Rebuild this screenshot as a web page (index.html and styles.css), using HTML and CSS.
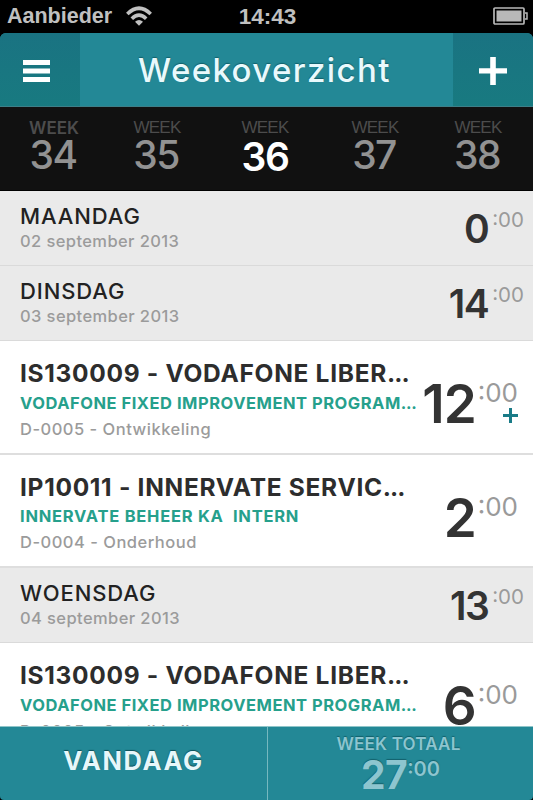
FILE: index.html
```html
<!DOCTYPE html>
<html lang="nl">
<head>
<meta charset="utf-8">
<title>Weekoverzicht</title>
<link rel="stylesheet" href="styles.css">
</head>
<body>
<div class="app">
  <div class="status">
    <div class="carrier"><span>Aanbieder</span>
      <svg class="wifi" viewBox="0 0 26 20" width="26" height="20"><g fill="none" stroke="#c0c0c0" stroke-width="3.6"><path d="M1.300 8Q13-3.500 24.700 8"/><path d="M5.800 12.700Q13 5.500 20.200 12.700"/></g><path d="M9 15.800Q13 12 17 15.800L13 19.800Z" fill="#c0c0c0"/></svg>
    </div>
    <div class="clock">14:43</div>
    <svg class="battery" viewBox="0 0 35 18" width="35" height="18"><rect x="1" y="1" width="30" height="16" rx="1" fill="none" stroke="#b8b8b8" stroke-width="1.700"/><rect x="3.500" y="3.500" width="25" height="11" fill="#b8b8b8"/><path d="M32 6h2v6h-2" fill="none" stroke="#b8b8b8" stroke-width="1.500"/></svg>
  </div>
  <header class="header">
    <button class="hbtn"><svg viewBox="0 0 27 22" width="27" height="22"><path d="M0 0h27v5H0zM0 8.500h27v5H0zM0 17h27v5H0z" fill="#fff"/></svg></button>
    <h1>Weekoverzicht</h1>
    <button class="hbtn"><svg viewBox="0 0 28 28" width="28" height="28"><path d="M11.200 0h5.600v11.200H28v5.200H16.800V28h-5.600V16.400H0v-5.200h11.200z" fill="#fff"/></svg></button>
  </header>
  <nav class="weeks">
    <div class="week first"><span>WEEK</span><b>34</b></div>
    <div class="week"><span>WEEK</span><b>35</b></div>
    <div class="week active"><span>WEEK</span><b>36</b></div>
    <div class="week"><span>WEEK</span><b>37</b></div>
    <div class="week"><span>WEEK</span><b>38</b></div>
  </nav>
  <main class="list">
    <section class="day"><div class="info"><h2>MAANDAG</h2><p>02 september 2013</p></div><div class="hours"><b>0</b><span>:00</span></div></section>
    <section class="day"><div class="info"><h2>DINSDAG</h2><p>03 september 2013</p></div><div class="hours"><b>14</b><span>:00</span></div></section>
    <article class="entry"><div class="info"><h3>IS130009 - VODAFONE LIBER<i>...</i></h3><h4>VODAFONE FIXED IMPROVEMENT PROGRAM<i>...</i></h4><p>D-0005 - Ontwikkeling</p></div>
      <div class="hours"><b>12</b><div class="minutes"><span>:00</span><svg class="more" viewBox="0 0 15 15" width="15" height="15"><path d="M7.500 0v15M0 7.500h15" stroke="#197b87" stroke-width="3"/></svg></div></div></article>
    <article class="entry second"><div class="info"><h3>IP10011 - INNERVATE SERVIC<i>...</i></h3><h4>INNERVATE BEHEER KA&nbsp; INTERN</h4><p>D-0004 - Onderhoud</p></div><div class="hours"><b>2</b><div class="minutes"><span>:00</span></div></div></article>
    <section class="day"><div class="info"><h2>WOENSDAG</h2><p>04 september 2013</p></div><div class="hours"><b>13</b><span>:00</span></div></section>
    <article class="entry"><div class="info"><h3>IS130009 - VODAFONE LIBER<i>...</i></h3><h4>VODAFONE FIXED IMPROVEMENT PROGRAM<i>...</i></h4><p>D-0005 - Ontwikkeling</p></div><div class="hours"><b>6</b><div class="minutes"><span>:00</span></div></div></article>
  </main>
  <footer class="footer">
    <div class="today">VANDAAG</div>
    <div class="total"><div class="label">WEEK TOTAAL</div><div class="sum"><b>27</b><span>:00</span></div></div>
  </footer>
</div>
</body>
</html>
```
FILE: styles.css
```css
* { box-sizing: border-box; }
body { margin: 0; background: #000; font-family: Inter, sans-serif; }
h1, h2, h3, h4, p { margin: 0; white-space: pre; }
svg { display: block; }
.app { width: 533px; height: 800px; display: flex; flex-direction: column; overflow: hidden; }

.status { flex: none; height: 33px; display: grid; grid-template-columns: 1fr auto 1fr; align-items: center; padding: 0 5px 0 7px; color: #c0c0c0; font: bold 21.5px/33px "Liberation Sans", sans-serif; }
.carrier { display: flex; align-items: center; gap: 14px; }
.wifi { margin-top: -1px; }
.clock { font-size: 22.5px; }
.battery { justify-self: end; margin-top: -2px; }

.header { flex: none; height: 74px; display: grid; grid-template-columns: 80px 1fr 80px; background: #238896; border-radius: 6px 6px 0 0; overflow: hidden; border-bottom: 1px solid #3d7f88; }
.header h1 { text-align: center; color: #e9f9fc; font-weight: 500; font-size: 33px; line-height: 75px; letter-spacing: 1.4px; padding-right: 4px; text-shadow: 0 -1px 1px #12616c; }
.hbtn { border: 0; padding: 0; display: flex; align-items: center; justify-content: center; background: linear-gradient(#1a7382, #187a80); }
.hbtn:first-child { padding-right: 7px; }

.weeks { flex: none; height: 84px; display: grid; grid-template-columns: 108px 98px 118px 102px 107px; padding-top: 11px; background: #111; border-bottom: 1px solid #000; text-align: center; }
.week { display: flex; flex-direction: column; }
.week span { color: #4c4c4c; font: 17px/20px "Liberation Sans", sans-serif; letter-spacing: -0.8px; }
.week b { color: #929292; font-size: 39px; line-height: 34px; font-weight: 500; letter-spacing: -1.5px; padding-right: 2px; }
.week.first span { font: 600 17px/20px Inter, sans-serif; letter-spacing: 0; }
.week.active b { color: #fff; font-weight: 600; line-height: 37px; padding-right: 0; }
.week:last-child { padding-right: 3px; }

.list { flex: 1; min-height: 0; overflow: hidden; background: #fff; }
.day, .entry { display: flex; justify-content: space-between; padding-left: 20px; }
.day { height: 75px; background: #eaeaea; border-bottom: 1px solid #dadada; padding-right: 9px; }
.day .info { padding-top: 13px; }
.day h2 { color: #222; font-size: 22px; line-height: 24px; font-weight: 500; letter-spacing: 0.9px; }
.info p { color: #9b9b9b; font-size: 16.5px; line-height: 26px; font-weight: 500; letter-spacing: 0.4px; }
.hours { display: flex; align-items: flex-start; }
.hours b { color: #333; font-weight: 600; }
.hours span { color: #9a9a9a; }
.day .hours b { font-size: 39px; line-height: 75px; letter-spacing: -1.5px; margin-right: 4px; }
.day .hours span { font-size: 20.5px; line-height: 58px; }

.entry { height: 114px; border-bottom: 2px solid #dedede; padding-right: 15px; }
.entry.second { height: 113px; }
.entry .info { padding-top: 16px; }
.entry h3 { color: #2d2d2d; font-size: 24.5px; line-height: 32px; font-weight: 700; letter-spacing: 0.7px; }
.entry h4 { color: #26a08c; font-size: 16.5px; line-height: 28px; font-weight: 700; letter-spacing: 0.52px; }
.entry h3 i { font-style: normal; letter-spacing: -1px; }
.entry h4 i { font-style: normal; letter-spacing: -0.3px; }
.entry.second h4 { letter-spacing: 0.75px; line-height: 27px; }
.entry .info p { line-height: 25px; letter-spacing: 0.5px; }
.entry .hours b { font-size: 53px; line-height: 60px; padding-top: 33px; letter-spacing: -1px; margin-right: 2px; }
.minutes { display: flex; flex-direction: column; align-items: flex-end; padding-top: 37px; }
.minutes span { font-size: 26px; line-height: 30px; }

.footer { flex: none; height: 74px; display: grid; grid-template-columns: 267px 1fr; background: #238896; border-top: 1px solid #8fc5c9; border-radius: 0 0 4px 4px; text-align: center; }
.today { color: #e7f7fa; font-size: 25.5px; font-weight: 700; line-height: 67px; letter-spacing: 1.6px; text-shadow: 0 -1px 1px #0c4f58; }
.total { border-left: 1px solid #76b8bf; color: #8dc5cf; text-shadow: 0 -1px 1px #12616c; padding-top: 7px; }
.label { font-size: 17px; line-height: 20px; font-weight: 600; letter-spacing: 0.2px; padding-right: 4px; }
.sum { display: flex; justify-content: center; }
.sum b { font-size: 39px; line-height: 42px; font-weight: 700; letter-spacing: -0.5px; }
.sum span { font-size: 20px; line-height: 30px; font-weight: 600; }
```
